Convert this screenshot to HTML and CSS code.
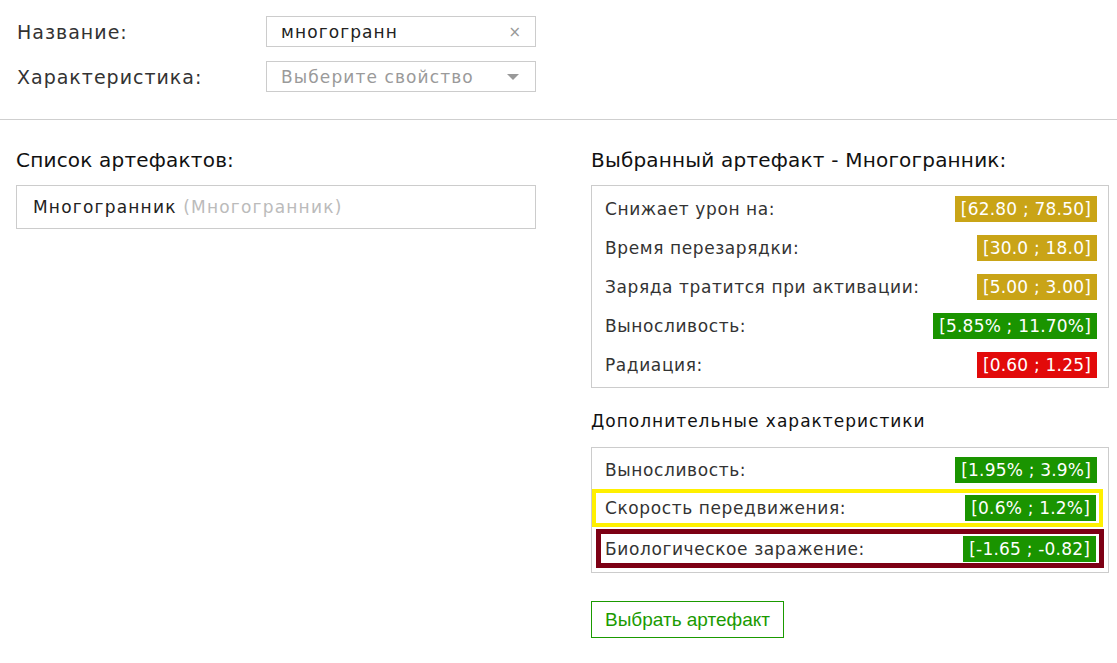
FILE: index.html
```html
<!DOCTYPE html>
<html lang="ru">
<head>
    <meta charset="UTF-8">
    <title>Артефакты</title>
    <link rel="stylesheet" href="styles.css">
</head>
<body>

<div class="filters">
    <div class="filter-row">
        <label>Название:</label>
        <div class="field">
            <span class="field-value">многогранн</span>
            <span class="clear">×</span>
        </div>
    </div>
    <div class="filter-row">
        <label>Характеристика:</label>
        <div class="field">
            <span class="field-placeholder">Выберите свойство</span>
            <span class="caret"></span>
        </div>
    </div>
</div>

<div class="main">
    <div class="col">
        <h2>Список артефактов:</h2>
        <div class="list-box">
            <div class="list-item">Многогранник <span class="muted">(Многогранник)</span></div>
        </div>
    </div>

    <div class="col">
        <h2>Выбранный артефакт - Многогранник:</h2>
        <div class="stats">
            <div class="stat"><span>Снижает урон на:</span><span class="badge gold">[62.80 ; 78.50]</span></div>
            <div class="stat"><span>Время перезарядки:</span><span class="badge gold">[30.0 ; 18.0]</span></div>
            <div class="stat"><span>Заряда тратится при активации:</span><span class="badge gold">[5.00 ; 3.00]</span></div>
            <div class="stat"><span>Выносливость:</span><span class="badge green">[5.85% ; 11.70%]</span></div>
            <div class="stat"><span>Радиация:</span><span class="badge red">[0.60 ; 1.25]</span></div>
        </div>

        <h3>Дополнительные характеристики</h3>
        <div class="stats extra">
            <div class="stat"><span>Выносливость:</span><span class="badge green">[1.95% ; 3.9%]</span></div>
            <div class="stat mark-yellow"><span>Скорость передвижения:</span><span class="badge green">[0.6% ; 1.2%]</span></div>
            <div class="stat mark-red"><span>Биологическое заражение:</span><span class="badge green">[-1.65 ; -0.82]</span></div>
        </div>

        <button class="pick-btn">Выбрать артефакт</button>
    </div>
</div>

</body>
</html>
```

FILE: styles.css
```css
body {
    margin: 0;
    font-family: "DejaVu Sans", sans-serif;
    color: #222;
    background: #fff;
}

.filters {
    padding: 16px 17px 27px;
    border-bottom: 1px solid #cfcfcf;
    display: flex;
    flex-direction: column;
    gap: 14px;
}

.filter-row {
    display: flex;
    align-items: center;
}

.filter-row label {
    width: 249px;
    font-size: 19px;
    letter-spacing: 1px;
    color: #333;
}

.field {
    width: 240px;
    height: 29px;
    border: 1px solid #cccccc;
    display: flex;
    align-items: center;
    justify-content: space-between;
    padding: 0 14px;
    font-size: 17px;
    letter-spacing: 1.1px;
}

.field-value {
    color: #222;
}

.field-placeholder {
    color: #9a9a9a;
}

.clear {
    color: #999;
    font-size: 15px;
    letter-spacing: 0;
}

.caret {
    width: 0;
    height: 0;
    border-left: 6px solid transparent;
    border-right: 6px solid transparent;
    border-top: 6px solid #999;
    margin-right: 2px;
}

.main {
    display: grid;
    grid-template-columns: 520px 518px;
    column-gap: 55px;
    padding-left: 16px;
}

h2 {
    font-size: 20px;
    font-weight: normal;
    letter-spacing: 0.2px;
    color: #111;
    margin: 28px 0 13px;
    line-height: 24px;
}

h3 {
    font-size: 17px;
    font-weight: normal;
    letter-spacing: 1px;
    color: #111;
    margin: 23px 0 16px;
    line-height: 20px;
}

.list-box {
    border: 1px solid #cccccc;
    height: 42px;
    display: flex;
    align-items: center;
    padding-left: 16px;
    font-size: 17px;
    letter-spacing: 1.2px;
}

.muted {
    color: #bbbbbb;
}

.stats {
    border: 1px solid #cccccc;
    padding: 3px 0;
}

.stats.extra {
    padding: 2px 0 4px;
}

.stat {
    display: flex;
    justify-content: space-between;
    align-items: center;
    height: 39px;
    box-sizing: border-box;
    padding: 0 11px 0 13px;
    font-size: 17px;
    letter-spacing: 0.6px;
    color: #333;
}

.mark-yellow {
    height: 38px;
    border: 4px solid #fff000;
    padding: 0 3px 0 9px;
    margin: 0 5px 2px 0;
}

.mark-red {
    height: 39px;
    border: 5px solid #7d0014;
    padding: 0 3px 0 4px;
    margin: 0 4px 0 4px;
}

.badge {
    color: #fff;
    padding: 0 6px;
    height: 26px;
    line-height: 26px;
    letter-spacing: 0.2px;
}

.gold {
    background: #c9a417;
}

.green {
    background: #1a9400;
}

.red {
    background: #e20a0a;
}

.pick-btn {
    margin-top: 28px;
    height: 37px;
    padding: 0 13px;
    border: 1px solid #1a9a00;
    background: #fff;
    color: #1a9a00;
    font-family: "Liberation Sans", Arial, sans-serif;
    font-size: 19px;
}
```
